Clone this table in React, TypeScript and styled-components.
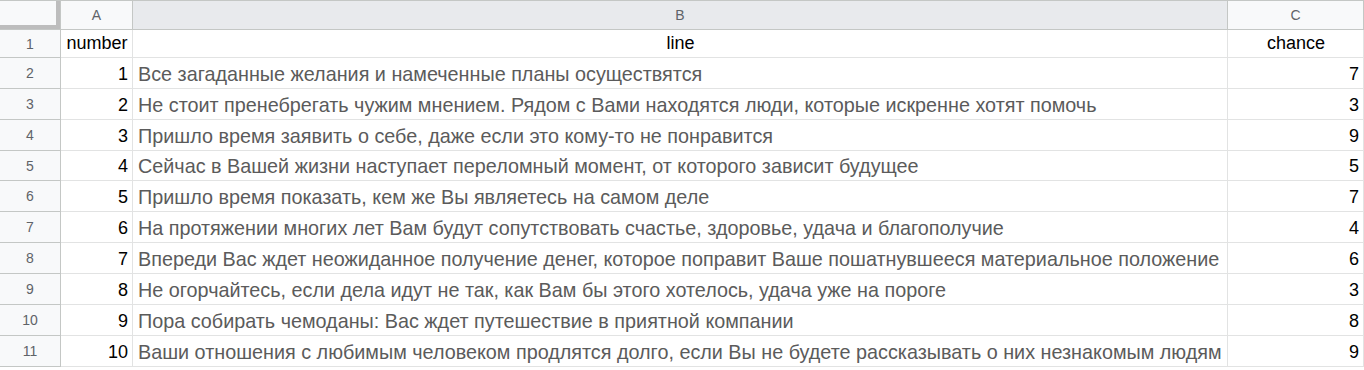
import React from "react";
import styled, { createGlobalStyle } from "styled-components";

const Global = createGlobalStyle`
  html, body { margin: 0; padding: 0; background: #ffffff; }
  body { font-family: "Liberation Sans", Arial, sans-serif; }
`;

const rows: [number, string, number][] = [
  [1, "Все загаданные желания и намеченные планы осуществятся", 7],
  [2, "Не стоит пренебрегать чужим мнением. Рядом с Вами находятся люди, которые искренне хотят помочь", 3],
  [3, "Пришло время заявить о себе, даже если это кому-то не понравится", 9],
  [4, "Сейчас в Вашей жизни наступает переломный момент, от которого зависит будущее", 5],
  [5, "Пришло время показать, кем же Вы являетесь на самом деле", 7],
  [6, "На протяжении многих лет Вам будут сопутствовать счастье, здоровье, удача и благополучие", 4],
  [7, "Впереди Вас ждет неожиданное получение денег, которое поправит Ваше пошатнувшееся материальное положение", 6],
  [8, "Не огорчайтесь, если дела идут не так, как Вам бы этого хотелось, удача уже на пороге", 3],
  [9, "Пора собирать чемоданы: Вас ждет путешествие в приятной компании", 8],
  [10, "Ваши отношения с любимым человеком продлятся долго, если Вы не будете рассказывать о них незнакомым людям", 9],
];

const Sheet = styled.div`
  display: grid;
  grid-template-columns: 61px 72px 1095px 136px;
  grid-template-rows: 30px 28px repeat(10, 30.87px);
  width: 1364px;
`;

const Corner = styled.div`
  background: #f8f9fa;
  border-top: 1px solid #c4c7c5;
  border-right: 1px solid #c4c7c5;
  border-bottom: 1px solid #c4c7c5;
  box-sizing: border-box;
  display: flex;
`;

const CornerFill = styled.div`
  flex: 1;
  border-right: 4px solid #bdbdbd;
  border-bottom: 4px solid #bdbdbd;
  background: #f8f9fa;
`;

const ColHead = styled.div<{ $active?: boolean }>`
  background: ${(p) => (p.$active ? "#e8eaed" : "#f8f9fa")};
  border-top: 1px solid #c4c7c5;
  border-right: 1px solid #c4c7c5;
  border-bottom: 1px solid #c4c7c5;
  box-sizing: border-box;
  display: flex;
  align-items: center;
  justify-content: center;
  color: #5f6368;
  font-size: 14px;
  padding-bottom: 1px;
`;

const RowHead = styled.div`
  background: #f8f9fa;
  border-right: 1px solid #c4c7c5;
  border-bottom: 1px solid #c4c7c5;
  box-sizing: border-box;
  display: flex;
  align-items: center;
  justify-content: center;
  color: #5f6368;
  font-size: 14px;
`;

const Cell = styled.div<{ $align: "left" | "right" | "center"; $muted?: boolean }>`
  border-right: 1px solid #e2e3e3;
  border-bottom: 1px solid #e2e3e3;
  box-sizing: border-box;
  display: flex;
  align-items: flex-end;
  justify-content: ${(p) =>
    p.$align === "left" ? "flex-start" : p.$align === "right" ? "flex-end" : "center"};
  padding: 0 4px 4px 5px;
  color: ${(p) => (p.$muted ? "#5b5b5b" : "#000000")};
  font-size: ${(p) => (p.$muted ? "19.8px" : "18px")};
  line-height: 20px;
  white-space: nowrap;
  overflow: hidden;
`;

export default function App() {
  return (
    <>
      <Global />
      <Sheet>
        <Corner>
          <CornerFill />
        </Corner>
        <ColHead>A</ColHead>
        <ColHead $active>B</ColHead>
        <ColHead>C</ColHead>

        <RowHead>1</RowHead>
        <Cell $align="center">number</Cell>
        <Cell $align="center">line</Cell>
        <Cell $align="center">chance</Cell>

        {rows.map(([n, text, chance], i) => (
          <React.Fragment key={n}>
            <RowHead>{i + 2}</RowHead>
            <Cell $align="right">{n}</Cell>
            <Cell $align="left" $muted>
              {text}
            </Cell>
            <Cell $align="right">{chance}</Cell>
          </React.Fragment>
        ))}
      </Sheet>
    </>
  );
}
